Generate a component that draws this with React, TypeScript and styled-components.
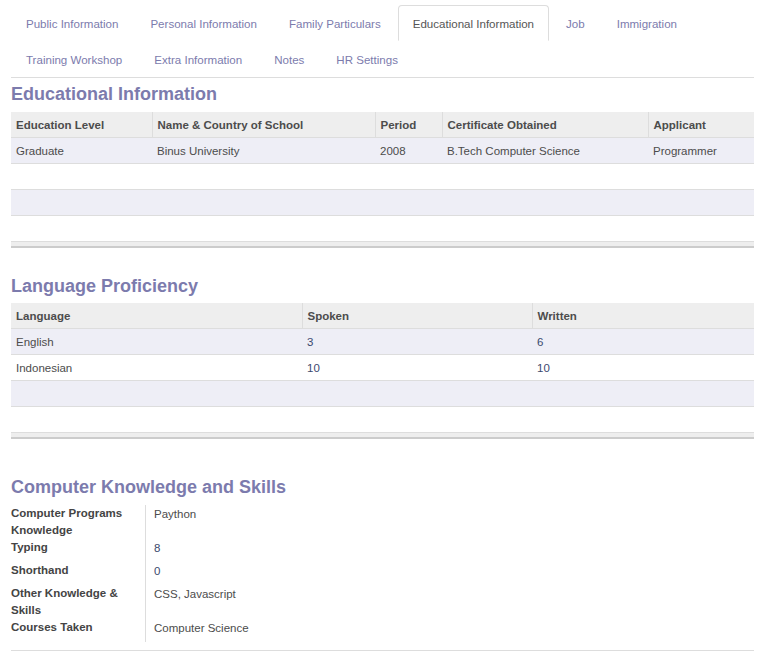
import React from "react"
import styled, {createGlobalStyle} from "styled-components"

const GlobalStyle = createGlobalStyle`
    html, body {
        margin: 0;
        padding: 0;
        background: #fff;
    }
    body {
        font-family: "Liberation Sans", Arial, sans-serif;
        font-size: 11.5px;
        color: #4c4c4c;
    }
`

const Page = styled.div`
    width: 743px;
    padding: 5px 13px 0 11px;
`

const TabBar = styled.ul`
    display: flex;
    flex-wrap: wrap;
    margin: 0;
    padding: 0;
    list-style: none;
    border-bottom: 1px solid #ddd;
`

const Tab = styled.li<{$active?: boolean}>`
    height: 34px;
    line-height: 36px;
    padding: 0 14px;
    margin-right: 2px;
    font-size: 11.55px;
    border: 1px solid ${p => p.$active ? "#ddd" : "transparent"};
    border-bottom-color: transparent;
    border-radius: 4px 4px 0 0;
    color: ${p => p.$active ? "#555" : "#7c7bad"};
    background: #fff;
    white-space: nowrap;
    overflow: hidden;
    cursor: pointer;
`

const Heading = styled.h2<{$top: number, $bottom?: number}>`
    margin: ${p => p.$top}px 0 ${p => p.$bottom ?? 7}px;
    font-size: 18px;
    line-height: 22px;
    font-weight: bold;
    color: #7c7bad;
`

const Table = styled.table`
    width: 100%;
    border-collapse: collapse;
    table-layout: fixed;
`

const Th = styled.th`
    height: 25px;
    padding: 0 5px;
    text-align: left;
    font-weight: bold;
    background: #eee;
    border-bottom: 1px solid #ddd;
    & + & { border-left: 1px solid #ddd; }
`

const Tr = styled.tr<{$striped?: boolean}>`
    background: ${p => p.$striped ? "#eeeef6" : "#fff"};
`

const Td = styled.td<{$num?: boolean}>`
    height: 25px;
    padding: 0 5px;
    border-bottom: 1px solid #ddd;
    color: ${p => p.$num ? "#3b4a6e" : "#4c4c4c"};
    white-space: nowrap;
    overflow: hidden;
`

const Foot = styled.td`
    height: 4px;
    padding: 0;
    background: #eee;
    border-bottom: 2px solid #ccc;
`

const Fields = styled.div`
    display: grid;
    grid-template-columns: 135px 1fr;
    margin-top: 5px;
    padding-bottom: 8px;
    border-bottom: 1px solid #ddd;
`

const Label = styled.div`
    min-height: 23px;
    padding-right: 4px;
    line-height: 17px;
    font-weight: bold;
    color: #444;
    border-right: 1px solid #ddd;
`

const Value = styled.div<{$num?: boolean}>`
    padding: 1px 0 0 8px;
    line-height: 17px;
    color: ${p => p.$num ? "#3b4a6e" : "#4c4c4c"};
`

const tabs = [
    "Public Information", "Personal Information", "Family Particulars",
    "Educational Information", "Job", "Immigration",
    "Training Workshop", "Extra Information", "Notes", "HR Settings",
]

const eduCols = [
    {name: "Education Level", w: 141},
    {name: "Name & Country of School", w: 223},
    {name: "Period", w: 67},
    {name: "Certificate Obtained", w: 206},
    {name: "Applicant", w: 106},
]

const eduRows = [
    ["Graduate", "Binus University", "2008", "B.Tech Computer Science", "Programmer"],
]

const langCols = [
    {name: "Language", w: 291},
    {name: "Spoken", w: 230},
    {name: "Written", w: 222},
]

const langRows = [
    ["English", "3", "6"],
    ["Indonesian", "10", "10"],
]

const skills = [
    {label: "Computer Programs Knowledge", value: "Paython"},
    {label: "Typing", value: "8", num: true},
    {label: "Shorthand", value: "0", num: true},
    {label: "Other Knowledge & Skills", value: "CSS, Javascript"},
    {label: "Courses Taken", value: "Computer Science"},
]

const isNum = (v: string) => /^\d+$/.test(v) && v.length < 4

interface ListProps {
    cols: Array<{name: string, w: number}>
    rows: Array<Array<string>>
}

const ListTable: React.FC<ListProps> = ({cols, rows}) => {
    // pad to four body rows like the form view does
    const filled = [...rows]
    while (filled.length < 4) filled.push(cols.map(() => ""))

    return (
        <Table>
            <colgroup>
                {cols.map(c => <col key={c.name} style={{width: c.w}} />)}
            </colgroup>
            <thead>
                <tr>
                    {cols.map(c => <Th key={c.name}>{c.name}</Th>)}
                </tr>
            </thead>
            <tbody>
                {filled.map((row, i) => (
                    <Tr key={i} $striped={i % 2 === 0}>
                        {row.map((cell, j) => (
                            <Td key={j} $num={isNum(cell)}>{cell}</Td>
                        ))}
                    </Tr>
                ))}
            </tbody>
            <tfoot>
                <tr><Foot colSpan={cols.length} /></tr>
            </tfoot>
        </Table>
    )
}

const App: React.FC = () => (
    <>
        <GlobalStyle />
        <Page>
            <TabBar>
                {tabs.map(t => (
                    <Tab key={t} $active={t === "Educational Information"}>{t}</Tab>
                ))}
            </TabBar>

            <Heading $top={5}>Educational Information</Heading>
            <ListTable cols={eduCols} rows={eduRows} />

            <Heading $top={27} $bottom={6}>Language Proficiency</Heading>
            <ListTable cols={langCols} rows={langRows} />

            <Heading $top={37}>Computer Knowledge and Skills</Heading>
            <Fields>
                {skills.map(s => (
                    <React.Fragment key={s.label}>
                        <Label>{s.label}</Label>
                        <Value $num={s.num}>{s.value}</Value>
                    </React.Fragment>
                ))}
            </Fields>
        </Page>
    </>
)

export default App
